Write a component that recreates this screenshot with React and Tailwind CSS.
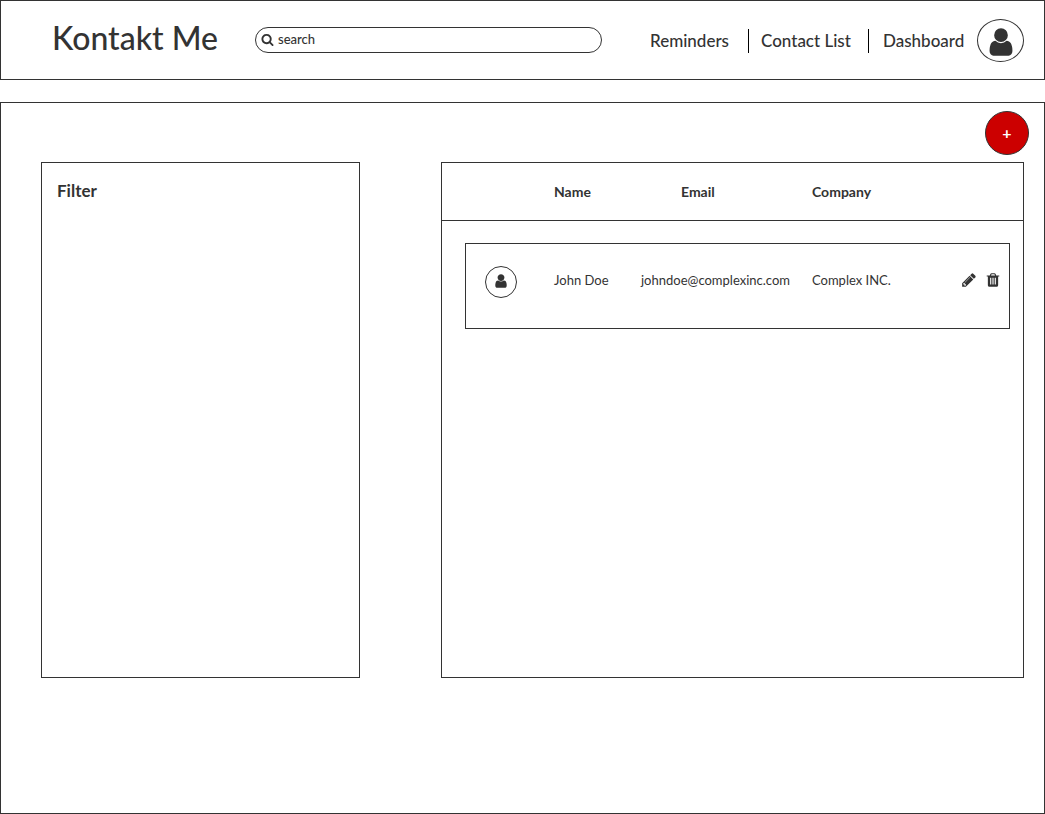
const PATHS = {
  user: "M1536 1399q0 109-62.5 187t-150.5 78h-854q-88 0-150.5-78t-62.5-187q0-85 8.5-160.5t31.5-152 58.5-131 94-89 134.5-34.5q131 128 313 128t313-128q76 0 134.5 34.5t94 89 58.5 131 31.5 152 8.5 160.5zm-256-887q0 159-112.5 271.5t-271.5 112.5-271.5-112.5-112.5-271.5 112.5-271.5 271.5-112.5 271.5 112.5 112.5 271.5z",
  pencil: "M491 1536l91-91-235-235-91 91v107h128v128h107zm523-928q0-22-22-22-10 0-17 7l-542 542q-7 7-7 17 0 22 22 22 10 0 17-7l542-542q7-7 7-17zm-54-192l416 416-832 832h-416v-416zm683 96q0 53-37 90l-166 166-416-416 166-165q36-38 90-38 53 0 91 38l235 234q37 39 37 91z",
  trash: "M704 1376v-704q0-14-9-23t-23-9h-64q-14 0-23 9t-9 23v704q0 14 9 23t23 9h64q14 0 23-9t9-23zm256 0v-704q0-14-9-23t-23-9h-64q-14 0-23 9t-9 23v704q0 14 9 23t23 9h64q14 0 23-9t9-23zm256 0v-704q0-14-9-23t-23-9h-64q-14 0-23 9t-9 23v704q0 14 9 23t23 9h64q14 0 23-9t9-23zm-544-992h448l-48-117q-7-9-17-11h-317q-10 2-17 11zm928 32v64q0 14-9 23t-23 9h-96v948q0 83-47 143.5t-113 60.5h-832q-66 0-113-58.5t-47-141.5v-952h-96q-14 0-23-9t-9-23v-64q0-14 9-23t23-9h309l70-167q15-37 54-63t79-26h320q40 0 79 26t54 63l70 167h309q14 0 23 9t9 23z",
  search: "M1216 832q0-185-131.5-316.5t-316.5-131.5-316.5 131.5-131.5 316.5 131.5 316.5 316.5 131.5 316.5-131.5 131.5-316.5zm512 832q0 52-38 90t-90 38q-54 0-90-38l-343-342q-179 124-399 124-143 0-273.5-55.5t-225-150-150-225-55.5-273.5 55.5-273.5 150-225 225-150 273.5-55.5 273.5 55.5 225 150 150 225 55.5 273.5q0 220-124 399l343 343q37 37 37 90z",
};

function Icon({ name, className }) {
  return (
    <svg viewBox="0 0 1792 1792" fill="currentColor" aria-hidden="true" className={className}>
      <path d={PATHS[name]} />
    </svg>
  );
}

const contacts = [{ name: "John Doe", email: "johndoe@complexinc.com", company: "Complex INC." }];

function Header() {
  return (
    <header className="flex h-20 items-center border border-[#333] pr-5 pl-[51px]">
      <h1 className="w-[203px] shrink-0 pb-1 text-[32px] leading-10 font-medium whitespace-nowrap">Kontakt Me</h1>
      <label className="flex h-[26px] min-w-0 flex-1 items-center gap-1 rounded-full border border-[#333] px-[5px] pb-[2px]">
        <Icon name="search" className="size-[13px] shrink-0" />
        <input
          type="search"
          aria-label="Search contacts"
          placeholder="search"
          className="w-full min-w-0 bg-transparent text-[13px] leading-5 font-medium outline-none placeholder:text-[#333] placeholder:opacity-100"
        />
      </label>
      <nav className="ml-12 flex shrink-0 items-center pt-[2px] text-[17px] leading-6 font-medium whitespace-nowrap">
        <a href="#reminders" className="w-[98px]">Reminders</a>
        <a href="#contacts" className="w-[120px] border-l border-black pl-3">Contact List</a>
        <a href="#dashboard" className="w-[109px] border-l border-black pl-[14px]">Dashboard</a>
      </nav>
      <button
        type="button"
        aria-label="Account"
        className="flex h-[43px] w-[47px] shrink-0 items-center justify-center rounded-[50%] border border-[#333] pt-[3px]"
      >
        <Icon name="user" className="size-8" />
      </button>
    </header>
  );
}

function ContactTable() {
  return (
    <section className="min-w-0 flex-1 border border-[#333]">
      <table className="block text-left text-[13px] leading-5">
        <thead className="block border-b border-[#333]">
          <tr className="grid h-[57px] grid-cols-[88px_87px_171px_1fr] items-center pr-[14px] pl-6 text-[14px]">
            <td></td>
            <th scope="col" className="font-bold">Name</th>
            <th scope="col" className="pl-10 font-bold">Email</th>
            <th scope="col" className="font-bold">Company</th>
          </tr>
        </thead>
        <tbody className="block pt-[22px] pr-[13px] pl-[23px]">
          {contacts.map((c) => (
            <tr
              key={c.email}
              className="grid h-[86px] grid-cols-[88px_87px_171px_1fr_auto] items-center border border-[#333] pr-2 pb-3"
            >
              <td className="pt-1 pl-[19px]">
                <span className="flex size-8 items-center justify-center rounded-full border border-[#333] pb-[2px]">
                  <Icon name="user" className="size-4" />
                </span>
              </td>
              <td>{c.name}</td>
              <td>{c.email}</td>
              <td>{c.company}</td>
              <td className="flex gap-2">
                <button type="button" aria-label="Edit contact">
                  <Icon name="pencil" className="size-4" />
                </button>
                <button type="button" aria-label="Delete contact">
                  <Icon name="trash" className="size-4" />
                </button>
              </td>
            </tr>
          ))}
        </tbody>
      </table>
    </section>
  );
}

export default function App() {
  return (
    <div className="flex min-h-screen flex-col gap-[22px] bg-white font-['Lato',sans-serif] text-[#333]">
      <Header />
      <main className="flex-1 border border-[#333] pt-2">
        <div className="flex justify-end pr-[15px] pb-[7px]">
          <button
            type="button"
            aria-label="Add contact"
            className="size-11 rounded-full border border-[#333] bg-[#cc0000] text-[16px] leading-5 font-bold text-white"
          >
            +
          </button>
        </div>
        <div className="flex min-h-[516px] gap-[81px] pr-5 pl-10">
          <aside className="w-[319px] shrink-0 border border-[#333] px-[15px] py-4">
            <h2 className="text-[17px] leading-6 font-bold">Filter</h2>
          </aside>
          <ContactTable />
        </div>
      </main>
    </div>
  );
}
